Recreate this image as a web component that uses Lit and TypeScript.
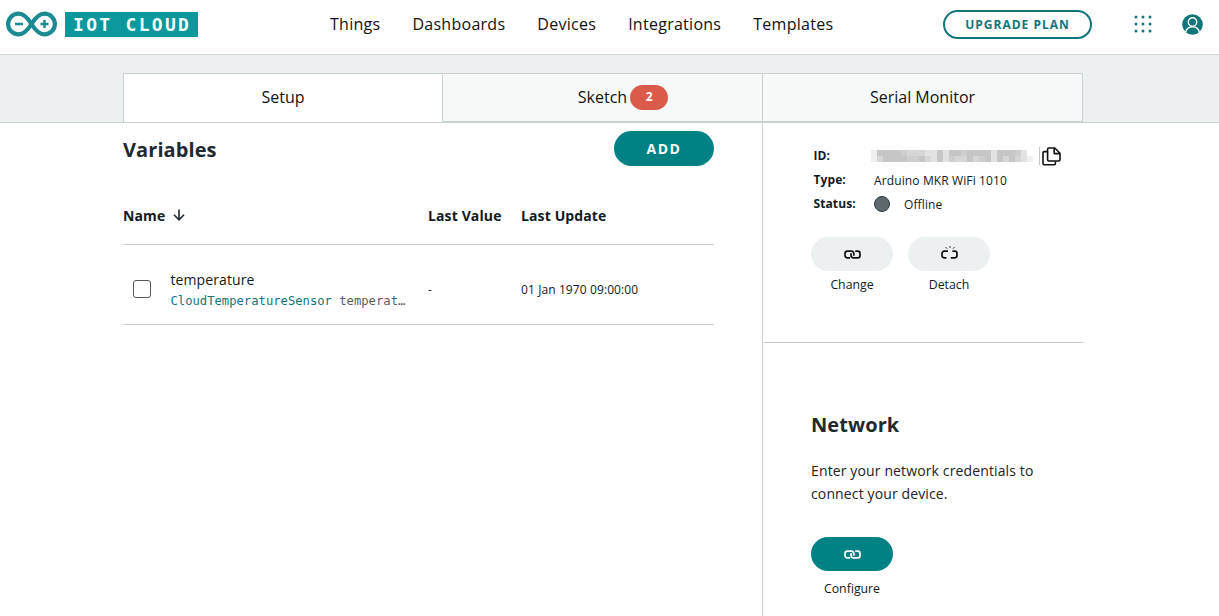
import { LitElement, html, css, svg } from "lit";
import { customElement } from "lit/decorators.js";

const mosaic = [
  "0bbbbcaaaddbdbbcbbbbdbbbcd-",
  "0abbbbccbadbdcaabacbdbabad0",
];
const shade: Record<string, string> = { "-": "#ffffff", "0": "#efefef", a: "#d6d6d6", b: "#c6c6c6", c: "#cecece", d: "#e2e2e2" };

const chain = svg`<g fill="none" stroke="currentColor" stroke-width="1.7">
  <path d="M6 7.8H3.4A2.4 2.4 0 0 1 1 5.4V3.6A2.4 2.4 0 0 1 3.4 1.2H7.6A2.2 2.2 0 0 1 9.8 3.4V5.8"/>
  <path d="M11.2 1.2H13.6A2.4 2.4 0 0 1 16 3.6V5.4A2.4 2.4 0 0 1 13.6 7.8H9.2A2.2 2.2 0 0 1 7 5.6V3.2"/>
</g>`;

@customElement("app-root")
export class AppRoot extends LitElement {
  static styles = css`
    :host { display: block; height: 616px; overflow: hidden; background: #fff; color: #111a1e; font-family: "Open Sans", sans-serif; }
    * { box-sizing: border-box; }
    svg { display: block; flex: none; }
    h2, p { margin: 0; }
    button { font: inherit; border: 0; padding: 0; cursor: pointer; }
    header { height: 55px; border-bottom: 1px solid #d5dadb; display: flex; align-items: center; padding: 0 16px 6px 6px; }
    .brand { display: flex; align-items: center; gap: 8px; width: 324px; }
    .product { background: #0b979c; color: #f0ffff; width: 133px; height: 25px; display: flex; align-items: center; padding-left: 8px; font: 700 18px/25px "DejaVu Sans Mono", monospace; letter-spacing: 2.3px; white-space: pre; }
    nav { display: flex; gap: 32px; font-size: 16px; letter-spacing: .27px; line-height: 24px; color: #111; }
    .tools { margin-left: auto; display: flex; align-items: center; color: #12757a; }
    .upgrade { width: 149px; height: 29px; border: 2px solid #12757a; border-radius: 15px; background: #fff; color: #12757a; font-size: 12px; font-weight: 700; letter-spacing: 1px; margin-right: 42px; }
    .dots { margin-right: 30px; }
    .band { height: 68px; background: #ecf0f1; border-bottom: 1px solid #c9d0d2; padding: 18px 136px 0 123px; }
    .tabs { display: grid; grid-template-columns: 318px 320px 320px; height: 49px; border: 1px solid #c9d0d2; border-bottom: 0; width: 960px; }
    .tab { display: flex; justify-content: center; align-items: center; gap: 3px; padding-bottom: 1px; font-size: 16px; color: #111; background: #f7f9f9; border-left: 1px solid #c9d0d2; border-bottom: 1px solid #c9d0d2; }
    .tab.active { background: #fff; border: 0; padding-bottom: 2px; }
    .tab.counted { padding-left: 41px; }
    .badge { width: 38px; height: 25px; border-radius: 13px; background: #da5b4a; color: #fff; font-size: 12px; font-weight: 700; line-height: 24px; text-align: center; }
    main { display: grid; grid-template-columns: 639px 321px; margin-left: 123px; height: 493px; }
    .vars { padding: 8px 48px 0 0; }
    .title { display: flex; justify-content: space-between; align-items: center; height: 35px; }
    .title h2 { padding-top: 2px; }
    h2 { font-size: 20px; font-weight: 700; letter-spacing: .08px; line-height: 28px; color: #1f2a30; }
    .add { width: 100px; height: 35px; border-radius: 18px; background: #008184; color: #fff; font-size: 14px; font-weight: 700; letter-spacing: 1.5px; }
    .row { display: grid; grid-template-columns: 305px 93px 1fr; align-items: center; width: 591px; border-bottom: 1px solid #ccc; }
    .head { margin-top: 22px; height: 57px; padding-bottom: 2px; font-size: 14px; font-weight: 700; letter-spacing: .12px; }
    .sort { display: flex; align-items: center; gap: 8px; }
    .item { height: 80px; padding-top: 9px; font-size: 12px; letter-spacing: .1px; }
    .cell { display: flex; align-items: center; padding-left: 10px; gap: 19.5px; }
    .check { width: 18px; height: 18px; border: 1px solid #555; border-radius: 3px; }
    .label-stack { padding-top: 4px; }
    .name { font-size: 14px; letter-spacing: .1px; line-height: 20px; }
    .code { font: 12.2px/22px "DejaVu Sans Mono", monospace; letter-spacing: 0; color: #555f61; width: 236px; white-space: pre; }
    .type { color: #12757a; }
    aside { border-left: 1px solid #c9d0d2; }
    .device { height: 220px; border-bottom: 1px solid #c9c9c9; padding: 21px 0 0 48px; }
    .info { display: grid; grid-template-columns: 60.5px 1fr; grid-auto-rows: 24px; align-items: center; padding-left: 2.5px; font-size: 12px; letter-spacing: .12px; }
    .label { font-weight: 700; letter-spacing: .1px; padding-bottom: 1px; }
    .value { display: flex; align-items: center; }
    .mosaic { margin-left: -3px; }
    .sep { width: 1px; height: 18px; background: #c4c4c4; margin: 0 2px 0 6px; }
    .dot { width: 16px; height: 16px; border-radius: 50%; background: #5d686c; border: 1px solid #303c40; margin-right: 14px; }
    .actions { display: flex; gap: 15px; margin-top: 21px; }
    .action { width: 82px; display: flex; flex-direction: column; align-items: center; font-size: 12.3px; line-height: 18px; gap: 5px; }
    .pill { width: 82px; height: 34px; border-radius: 17px; background: #ecf0f1; color: #111; display: grid; place-items: center; }
    .pill.primary { background: #008184; color: #fff; }
    .broken { margin-bottom: 4px; }
    .network { padding: 68px 0 0 48px; }
    .network p { margin-top: 20px; font-size: 14px; line-height: 23px; letter-spacing: .13px; width: 240px; color: #222; }
    .network .action { margin-top: 32px; gap: 9px; }
  `;

  render() {
    return html`
      <header>
        <div class="brand">
          <svg width="51" height="26" viewBox="0 0 51 26">
            <path d="M25.5 13C21.5 6.5 17.6 2.6 12.5 2.6a10.4 10.4 0 0 0 0 20.8C17.6 23.4 21.5 19.5 25.5 13S33.4 2.6 38.5 2.6a10.4 10.4 0 0 1 0 20.8C33.4 23.4 29.5 19.5 25.5 13Z" fill="#fff" stroke="#1c8a91" stroke-width="4.2"/>
            <path d="M9 13h8M34.5 13h8M38.5 9v8" stroke="#1c8a91" stroke-width="2.4"/>
          </svg>
          <div class="product">IOT CLOUD</div>
        </div>
        <nav><span>Things</span><span>Dashboards</span><span>Devices</span><span>Integrations</span><span>Templates</span></nav>
        <div class="tools">
          <button class="upgrade">UPGRADE PLAN</button>
          <svg class="dots" width="18" height="18" viewBox="0 0 18 18" fill="currentColor">
            ${[2, 9, 16].map((y) => [2, 9, 16].map((x) => svg`<circle cx=${x} cy=${y} r="1.5"/>`))}
          </svg>
          <svg width="21" height="21" viewBox="0 0 21 21">
            <circle cx="10.5" cy="10.5" r="10.3" fill="#12757a"/>
            <circle cx="10.5" cy="8" r="4.2" fill="none" stroke="#fff" stroke-width="1.4"/>
            <path d="M3.6 18.2C4.4 14.8 7 12.9 10.5 12.9S16.6 14.8 17.4 18.2" fill="none" stroke="#fff" stroke-width="1.4"/>
          </svg>
        </div>
      </header>
      <div class="band">
        <div class="tabs">
          <div class="tab active">Setup</div>
          <div class="tab counted">Sketch<span class="badge">2</span></div>
          <div class="tab">Serial Monitor</div>
        </div>
      </div>
      <main>
        <section class="vars">
          <div class="title"><h2>Variables</h2><button class="add">ADD</button></div>
          <div class="row head">
            <span class="sort">Name
              <svg width="12" height="12" viewBox="0 0 12 12" fill="none" stroke="#1f2a30" stroke-width="1.6"><path d="M6 .5V10.6M1 5.8 6 10.8 11 5.8"/></svg>
            </span>
            <span>Last Value</span><span>Last Update</span>
          </div>
          <div class="row item">
            <div class="cell">
              <span class="check"></span>
              <div class="label-stack"><div class="name">temperature</div><div class="code"><span class="type">CloudTemperatureSensor</span> temperat…</div></div>
            </div>
            <span>-</span><span class="date">01 Jan 1970 09:00:00</span>
          </div>
        </section>
        <aside>
          <section class="device">
            <div class="info">
              <span class="label">ID:</span>
              <span class="value">
                <svg class="mosaic" width="162" height="12" viewBox="0 0 162 12">
                  ${mosaic.map((row, y) => [...row].map((k, x) => svg`<rect x=${x * 6} y=${y * 6} width="6" height="6" fill=${shade[k]}/>`))}
                </svg>
                <span class="sep"></span>
                <svg width="19" height="19" viewBox="0 0 19 19" fill="none" stroke="#111" stroke-width="1.6" stroke-linejoin="round">
                  <path d="M6.8 1H12.8L18 6.2V12.8A1.2 1.2 0 0 1 16.8 14H6.8A1.2 1.2 0 0 1 5.6 12.8V2.2A1.2 1.2 0 0 1 6.8 1ZM12.2 1.4V6.6H17.6"/>
                  <path d="M5.4 4.6H2.2A1.2 1.2 0 0 0 1 5.8V16.6A1.2 1.2 0 0 0 2.2 17.8H12.2A1.2 1.2 0 0 0 13.4 16.6V14.4"/>
                </svg>
              </span>
              <span class="label">Type:</span><span class="value">Arduino MKR WiFi 1010</span>
              <span class="label">Status:</span><span class="value"><i class="dot"></i>Offline</span>
            </div>
            <div class="actions">
              <div class="action"><span class="pill"><svg width="17" height="9" viewBox="0 0 17 9">${chain}</svg></span>Change</div>
              <div class="action">
                <span class="pill"><svg class="broken" width="17" height="13" viewBox="0 0 17 13" fill="none" stroke="currentColor" stroke-width="1.7">
                  <path d="M7 5.2H3.2A2.2 2.2 0 0 0 1 7.4V9.6A2.2 2.2 0 0 0 3.2 11.8H5.4M11.4 5.2H13.8A2.2 2.2 0 0 1 16 7.4V9.6A2.2 2.2 0 0 1 13.8 11.8H9.8"/>
                  <path d="M4.8 1.2 6 2.6M9 .2V1.8M13.4 1.2 12.2 2.6" stroke-width="1"/>
                </svg></span>Detach
              </div>
            </div>
          </section>
          <section class="network">
            <h2>Network</h2>
            <p>Enter your network credentials to connect your device.</p>
            <div class="action"><span class="pill primary"><svg width="17" height="9" viewBox="0 0 17 9">${chain}</svg></span>Configure</div>
          </section>
        </aside>
      </main>
    `;
  }
}
